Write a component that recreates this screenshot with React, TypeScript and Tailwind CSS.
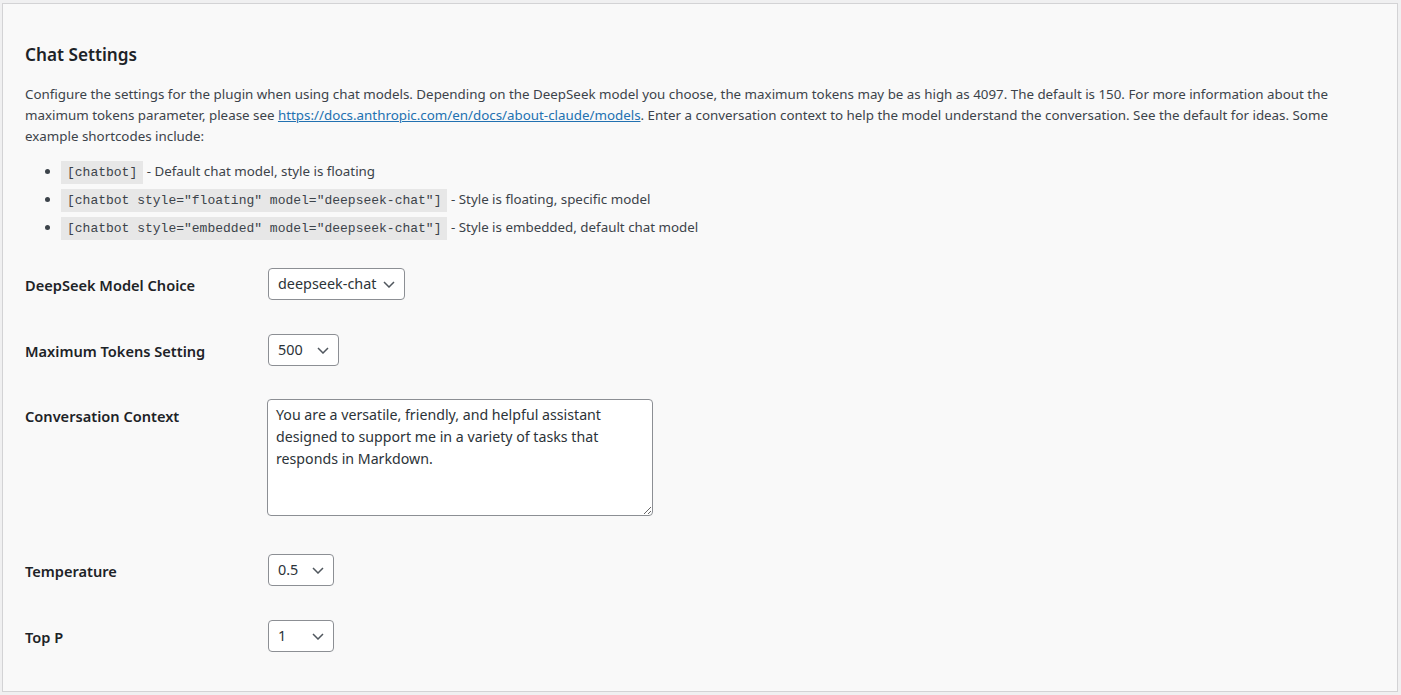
import { ReactNode } from "react";

const shortcodes = [
  { code: "[chatbot]", note: "Default chat model, style is floating" },
  {
    code: '[chatbot style="floating" model="deepseek-chat"]',
    note: "Style is floating, specific model",
  },
  {
    code: '[chatbot style="embedded" model="deepseek-chat"]',
    note: "Style is embedded, default chat model",
  },
];

function Chevron() {
  return (
    <svg width="12" height="7" viewBox="0 0 12 7" fill="none" className="shrink-0">
      <path d="M1 1l5 5 5-5" stroke="#50575e" strokeWidth="1.5" />
    </svg>
  );
}

function Select({ value, width }: { value: string; width: string }) {
  return (
    <div
      className={`flex h-[32px] items-center justify-between rounded-[4px] border border-[#8c8f94] bg-white pl-[9px] pr-[9px] text-[14.4px] text-[#2c3338] ${width}`}
    >
      <span>{value}</span>
      <Chevron />
    </div>
  );
}

function Row({ label, children, className = "" }: { label: string; children: ReactNode; className?: string }) {
  return (
    <div className={`flex items-start ${className}`}>
      <div className="flex h-[32px] w-[243px] shrink-0 items-center pt-[3px] text-[14.6px] font-semibold text-[#1d2327]">
        {label}
      </div>
      <div>{children}</div>
    </div>
  );
}

export default function App() {
  return (
    <div
      className="min-h-[695px] bg-[#f0f0f1] pl-[2px] pr-[3px] pt-[3px] pb-[3px]"
      style={{ fontFamily: '"Noto Sans", sans-serif' }}
    >
      <div className="h-[689px] border border-[#d3d3d5] bg-[#f9f9f9] pl-[22px] pr-[22px] pt-[39px]">
        <h2 className="text-[17.2px] font-semibold leading-[24px] text-[#1d2327]">Chat Settings</h2>

        <p className="mt-[17px] text-[13.35px] leading-[21px] text-[#3c434a]">
          Configure the settings for the plugin when using chat models. Depending on the DeepSeek model you
          choose, the maximum tokens may be as high as 4097. The default is 150. For more information about the
          maximum tokens parameter, please see{" "}
          <a href="#" className="text-[#2271b1] underline">
            https://docs.anthropic.com/en/docs/about-claude/models
          </a>
          . Enter a conversation context to help the model understand the conversation. See the default for
          ideas. Some example shortcodes include:
        </p>

        <ul className="mt-[13px] list-disc pl-[36px] text-[13.35px] leading-[22px] text-[#3c434a]">
          {shortcodes.map((s) => (
            <li key={s.code} className="mb-[6px]">
              <code
                className="bg-black/[0.07] px-[6px] py-[4px] text-[13px] leading-[15px] text-[#3c434a]"
                style={{ fontFamily: '"Liberation Mono", monospace' }}
              >
                {s.code}
              </code>{" "}
              - {s.note}
            </li>
          ))}
        </ul>

        <div className="mt-[13px] flex flex-col">
          <Row label="DeepSeek Model Choice" className="pt-[17px] pb-[17px]">
            <Select value="deepseek-chat" width="w-[137px]" />
          </Row>
          <Row label="Maximum Tokens Setting" className="pt-[17px] pb-[16px]">
            <Select value="500" width="w-[71px]" />
          </Row>
          <Row label="Conversation Context" className="pt-[17px] pb-[21px]">
            <textarea
              className="-ml-px block h-[117px] w-[386px] rounded-[4px] border border-[#8c8f94] bg-white px-[8px] py-[4px] text-[14.2px] leading-[22px] text-[#2c3338] outline-none"
              defaultValue="You are a versatile, friendly, and helpful assistant designed to support me in a variety of tasks that responds in Markdown."
            />
          </Row>
          <Row label="Temperature" className="pt-[17px] pb-[17px]">
            <Select value="0.5" width="w-[66px]" />
          </Row>
          <Row label="Top P" className="pt-[17px] pb-[17px]">
            <Select value="1" width="w-[66px]" />
          </Row>
        </div>
      </div>
    </div>
  );
}
